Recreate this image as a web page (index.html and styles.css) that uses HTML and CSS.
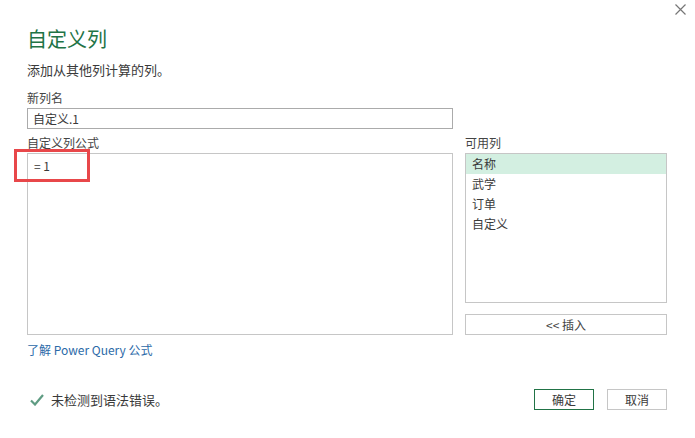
FILE: index.html
```html
<!DOCTYPE html>
<html lang="zh-CN">
<head>
  <meta charset="UTF-8">
  <title>自定义列</title>
  <link rel="stylesheet" href="styles.css">
</head>
<body>

  <div class="dialog">
    <button class="close" title="关闭">
      <svg width="11" height="11" viewBox="0 0 11 11"><path d="M0.5 0.5 L10.5 10.5 M10.5 0.5 L0.5 10.5" stroke="#767676" stroke-width="1.2" fill="none"/></svg>
    </button>

    <h1 class="title">自定义列</h1>
    <p class="subtitle">添加从其他列计算的列。</p>

    <label class="label">新列名</label>
    <div class="input">自定义.1</div>

    <div class="columns">
      <div class="formula-col">
        <label class="label">自定义列公式</label>
        <div class="formula">
          <span class="code">= 1</span>
          <div class="highlight"></div>
        </div>
      </div>

      <div class="avail-col">
        <label class="label">可用列</label>
        <ul class="list">
          <li class="selected">名称</li>
          <li>武学</li>
          <li>订单</li>
          <li>自定义</li>
        </ul>
        <button class="insert">&lt;&lt; 插入</button>
      </div>
    </div>

    <a class="learn" href="#">了解 Power Query 公式</a>

    <div class="footer">
      <div class="status">
        <svg width="14" height="12" viewBox="0 0 14 12"><path d="M1 6.5 L5 10.5 L13 1" stroke="#5f9c83" stroke-width="2.2" fill="none"/></svg>
        <span>未检测到语法错误。</span>
      </div>
      <div class="actions">
        <button class="btn primary">确定</button>
        <button class="btn">取消</button>
      </div>
    </div>
  </div>

</body>
</html>
```

FILE: styles.css
```css
* {
  margin: 0;
  padding: 0;
  box-sizing: border-box;
}

body {
  width: 695px;
  height: 438px;
  background: #ffffff;
  font-family: "Noto Sans CJK SC", "Noto Sans", sans-serif;
  color: #444444;
  font-size: 12px;
  overflow: hidden;
}

.dialog {
  position: relative;
  padding: 26px 28px 0 27px;
}

.close {
  position: absolute;
  top: 4px;
  right: 9px;
  width: 11px;
  height: 11px;
  border: none;
  background: none;
  display: flex;
}

.title {
  font-size: 20px;
  font-weight: normal;
  line-height: 26px;
  color: #217346;
}

.subtitle {
  margin-top: 9px;
  font-size: 13px;
  line-height: 18px;
  color: #3a3a3a;
}

.label {
  display: block;
  line-height: 16px;
  margin-bottom: 2px;
  color: #444444;
}

.subtitle + .label {
  margin-top: 11px;
}

.input {
  width: 426px;
  height: 21px;
  border: 1px solid #ababab;
  padding: 0 5px;
  line-height: 19px;
  color: #3a3a3a;
}

.columns {
  margin-top: 6px;
  display: grid;
  grid-template-columns: 426px 202px;
  column-gap: 12px;
}

.formula {
  position: relative;
  height: 182px;
  border: 1px solid #c6c6c6;
  padding: 4px 6px;
  line-height: 16px;
}

.code {
  font-size: 12px;
  color: #3a3a3a;
}

.highlight {
  position: absolute;
  left: -14px;
  top: -5px;
  width: 76px;
  height: 33px;
  border: 3px solid #e8474a;
}

.list {
  list-style: none;
  height: 150px;
  border: 1px solid #c6c6c6;
}

.list li {
  height: 20px;
  line-height: 20px;
  padding-left: 6px;
  color: #3a3a3a;
}

.list li.selected {
  background: #d3efe1;
}

.insert {
  margin-top: 11px;
  width: 100%;
  height: 21px;
  border: 1px solid #c6c6c6;
  background: #ffffff;
  font-family: inherit;
  font-size: 12px;
  color: #444444;
}

.learn {
  display: block;
  margin-top: 7px;
  line-height: 16px;
  color: #2c6aa8;
  text-decoration: none;
}

.footer {
  margin-top: 31px;
  display: flex;
  justify-content: space-between;
  align-items: center;
}

.status {
  display: flex;
  align-items: center;
  gap: 7px;
  padding-left: 3px;
  font-size: 13px;
  color: #3a3a3a;
}

.actions {
  display: flex;
  gap: 13px;
}

.btn {
  width: 60px;
  height: 21px;
  border: 1px solid #c6c6c6;
  background: #ffffff;
  font-family: inherit;
  font-size: 12px;
  color: #3a3a3a;
}

.btn.primary {
  border-color: #217346;
}
```
